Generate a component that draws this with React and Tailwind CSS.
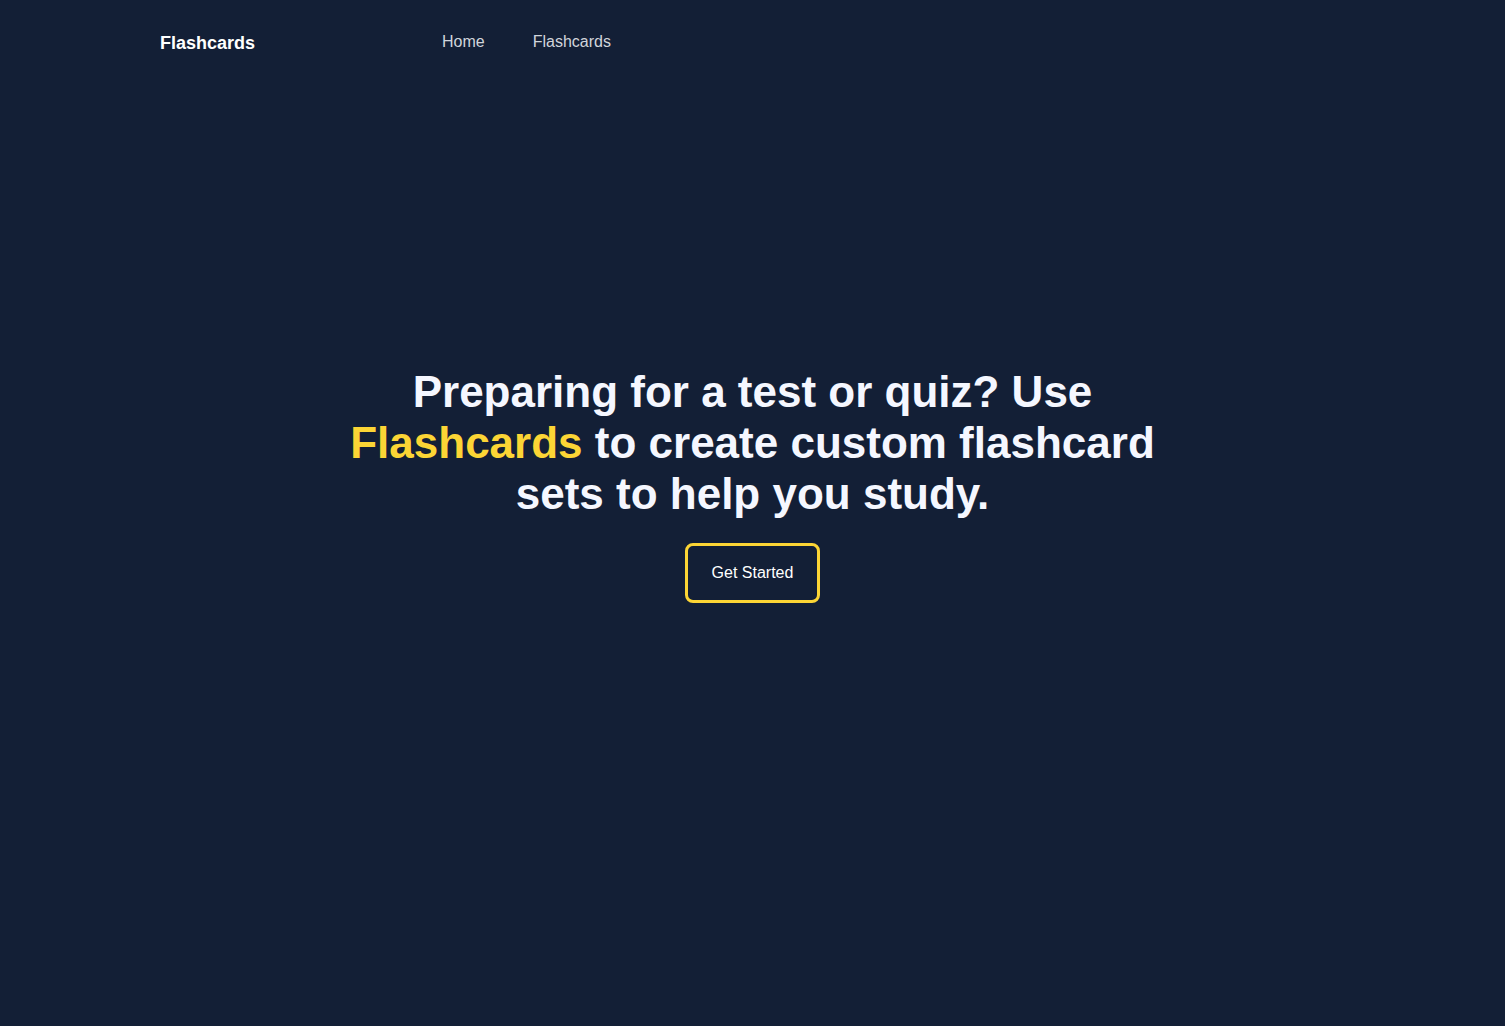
import React from "react";

export default function App() {
  return (
    <div className="min-h-screen bg-[#131f36] text-white font-['Liberation_Sans',Arial,sans-serif]">
      <nav className="flex items-center h-[84px] px-[160px]">
        <a href="#" className="text-[18px] font-bold text-white w-[282px] pt-[2px]">Flashcards</a>
        <div className="flex gap-12 text-[16px] text-gray-300">
          <a href="#">Home</a>
          <a href="#">Flashcards</a>
        </div>
      </nav>

      <main className="flex flex-col items-center pt-[282px]">
        <h1 className="max-w-[900px] text-center text-[44px] leading-[51px] font-bold text-[#f5f7ff]">
          Preparing for a test or quiz? Use <span className="text-[#fcd535]">Flashcards</span> to create custom flashcard sets to help you study.
        </h1>
        <button className="mt-6 h-[60px] px-6 rounded-lg border-[3px] border-[#fcd535] text-[16px] text-white">
          Get Started
        </button>
      </main>
    </div>
  );
}
